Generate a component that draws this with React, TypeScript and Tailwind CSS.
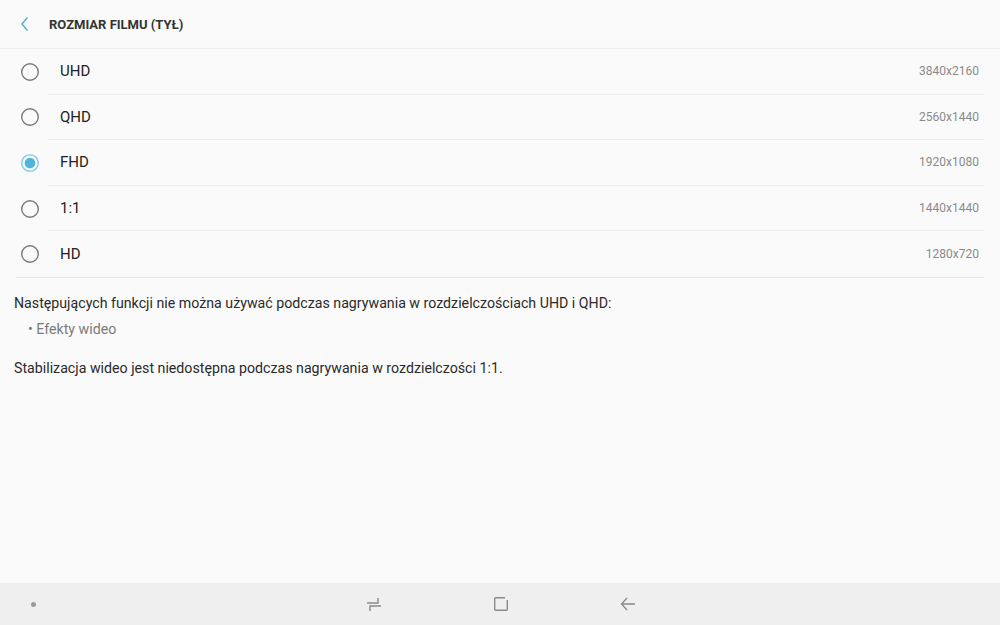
import React from "react";

const rows = [
  { label: "UHD", value: "3840x2160", checked: false },
  { label: "QHD", value: "2560x1440", checked: false },
  { label: "FHD", value: "1920x1080", checked: true },
  { label: "1:1", value: "1440x1440", checked: false },
  { label: "HD", value: "1280x720", checked: false },
];

function Radio({ checked }: { checked: boolean }) {
  return checked ? (
    <svg width="20" height="20" viewBox="0 0 20 20">
      <circle cx="10" cy="10" r="8.3" fill="none" stroke="#8fd0e6" strokeWidth="1.6" />
      <circle cx="10" cy="10" r="5.3" fill="#4db6dc" />
    </svg>
  ) : (
    <svg width="20" height="20" viewBox="0 0 20 20">
      <circle cx="10" cy="10" r="8.3" fill="none" stroke="#7a7a7a" strokeWidth="1.4" />
    </svg>
  );
}

export default function App() {
  return (
    <div
      className="w-[1000px] h-[625px] bg-[#fafafa] flex flex-col overflow-hidden"
      style={{ fontFamily: "Roboto, 'Noto Sans', sans-serif" }}
    >
      <div className="h-[49px] flex items-center border-b border-[#eeeeee] shrink-0">
        <div className="w-[49px] flex items-center justify-center pl-[1px]">
          <svg width="12" height="16" viewBox="0 0 12 16">
            <path d="M8 2 L3 8 L8 14" fill="none" stroke="#5ab3c9" strokeWidth="1.6" strokeLinecap="round" strokeLinejoin="round" />
          </svg>
        </div>
        <div className="text-[13px] font-bold text-[#333333] pt-[1px]">ROZMIAR FILMU (TYŁ)</div>
      </div>

      <div className="px-[16px]">
        <div className="border-b border-[#e8e8e8]">
          {rows.map((r, i) => (
            <div key={r.label} className="flex items-stretch h-[45.6px]">
              <div className="w-[32px] flex items-center justify-start pl-[4px]">
                <Radio checked={r.checked} />
              </div>
              <div
                className={
                  "flex-1 flex items-center justify-between pl-[12px] pr-[5px] " +
                  (i < rows.length - 1 ? "border-b border-[#ececec]" : "")
                }
              >
                <span className="text-[15px] text-[#222222]">{r.label}</span>
                <span className="text-[12px] text-[#8a8a8a]">{r.value}</span>
              </div>
            </div>
          ))}
        </div>
      </div>

      <div className="px-[14px] pt-[15px] text-[14.2px] text-[#2a2a2a]">
        <p className="leading-[20px]">
          Następujących funkcji nie można używać podczas nagrywania w rozdzielczościach UHD i QHD:
        </p>
        <p className="leading-[20px] mt-[6px] pl-[14px] text-[#7a7a7a]">• Efekty wideo</p>
        <p className="leading-[20px] mt-[19px]">
          Stabilizacja wideo jest niedostępna podczas nagrywania w rozdzielczości 1:1.
        </p>
      </div>

      <div className="flex-1" />

      <div className="h-[42px] bg-[#efefef] shrink-0 relative flex items-center">
        <div className="w-[66px] flex justify-center">
          <div className="w-[5px] h-[5px] rounded-full bg-[#9a9a9a]" />
        </div>
        <div className="flex-1 flex justify-center items-center gap-[107px] pr-[64px]">
          <svg width="20" height="20" viewBox="0 0 20 20">
            <path d="M3 9 H14 V4" fill="none" stroke="#8a8a8a" strokeWidth="1.4" />
            <path d="M17 12 H6 V17" fill="none" stroke="#8a8a8a" strokeWidth="1.4" />
          </svg>
          <svg width="20" height="20" viewBox="0 0 20 20">
            <path d="M14 3.7 H4.7 Q3.7 3.7 3.7 4.7 V15.3 Q3.7 16.3 4.7 16.3 H15.3 Q16.3 16.3 16.3 15.3 V6" fill="none" stroke="#8a8a8a" strokeWidth="1.4" />
          </svg>
          <svg width="20" height="20" viewBox="0 0 20 20">
            <path d="M9 4 L3.5 10 L9 16 M3.5 10 H17" fill="none" stroke="#8a8a8a" strokeWidth="1.3" />
          </svg>
        </div>
      </div>
    </div>
  );
}
